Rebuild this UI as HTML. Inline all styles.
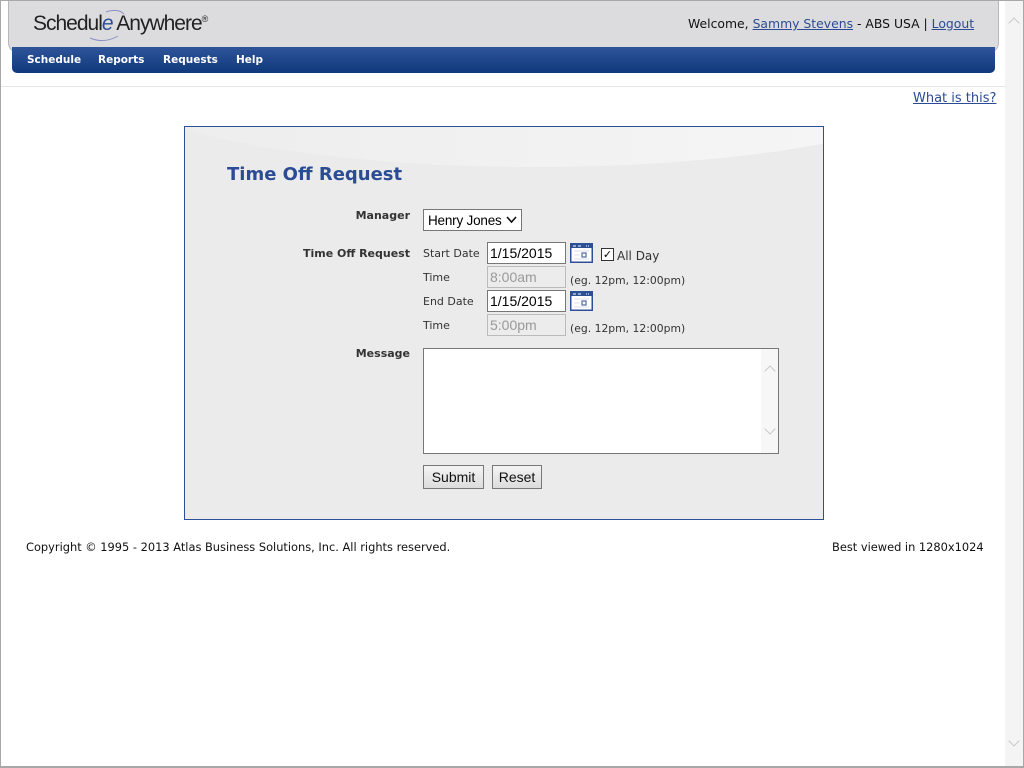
<!DOCTYPE html>
<html><head><style>
*{box-sizing:border-box;margin:0;padding:0}
body{width:1024px;height:768px;position:relative;background:#fff;font-family:"DejaVu Sans",Verdana,sans-serif;overflow:hidden}
.a{position:absolute}
.win{left:0;top:0;width:1024px;height:768px;border:1px solid #a8a8a8;border-bottom:2px solid #a8a8a8}
.sb{left:1005px;top:1px;width:18px;height:765px;background:#f4f4f4}
.hdr{left:8px;top:1px;width:991px;height:52px;background:#dcdcde;border:1px solid #b8b8ba;border-top:none;border-radius:0 0 10px 10px}
.nav{left:12px;top:47px;width:983px;height:26px;background:linear-gradient(#2f5499,#0f3a7c);border-radius:0 0 5px 5px}
.nav span{position:absolute;top:7px;color:#fff;font-weight:bold;font-size:10.5px}
.lbl{font-size:11px;font-weight:bold;color:#333;text-align:right;width:200px}
.sm{font-size:11px;color:#333}
input.t{position:absolute;height:22px;border:1px solid #777;font:14px "Liberation Sans",Arial,sans-serif;padding:0 2px;background:#fff}
input.d{background:#ececec;border-color:#bbb;color:#999}
.btn{height:24px;border:1px solid #777;background:linear-gradient(#f4f4f4,#dcdcdc);font:14px "Liberation Sans",Arial,sans-serif;text-align:center;line-height:22px;color:#111}
a{color:#2b4c94}
.chev{position:absolute;width:8px;height:8px;border-color:#c8c8c8;border-style:solid;border-width:0}
</style></head><body>
<div class="a win"></div>
<div class="a sb"><div class="chev" style="left:5px;top:18px;border-left-width:1.5px;border-top-width:1.5px;transform:rotate(45deg)"></div><div class="chev" style="left:5px;top:736px;border-right-width:1.5px;border-bottom-width:1.5px;transform:rotate(45deg)"></div></div>
<div class="a hdr"></div>
<div class="a" style="left:33px;top:12px;font:21px 'Liberation Sans',Arial,sans-serif;color:#222;letter-spacing:-1px">Schedul<i style="color:#2b4c94">e</i> Anywhere<sup style="font-size:9px">®</sup></div>
<svg class="a" style="left:84px;top:8px" width="50" height="34"><path d="M6 30 Q20 36 34 28 M22 4 Q34 0 40 6" stroke="#8a90c8" fill="none" stroke-width="1"/></svg>
<div class="a" style="left:688px;top:16px;font-size:12.4px;color:#111">Welcome, <a href="#">Sammy Stevens</a> - ABS USA | <a href="#">Logout</a></div>
<div class="a nav"><span style="left:15px">Schedule</span><span style="left:86px">Reports</span><span style="left:151px">Requests</span><span style="left:224px">Help</span></div>
<div class="a" style="left:1px;top:86px;width:1004px;height:1px;background:#e6e6e6"></div>
<div class="a" style="left:913px;top:91px;font-size:13px"><a href="#">What is this?</a></div>

<div class="a" style="left:184px;top:126px;width:640px;height:394px;border:1px solid #2d4f96;background:#ebebeb;overflow:hidden">
<div class="a" style="left:-100px;top:-160px;width:900px;height:200px;border-radius:50%;background:linear-gradient(90deg,#ececec,#f7f7f7)"></div>
<div class="a" style="left:42px;top:37px;font-size:18px;font-weight:bold;color:#2b4c94">Time Off Request</div>
</div>
<div class="a lbl" style="left:210px;top:209px">Manager</div>
<div class="a" style="left:423px;top:209px;width:99px;height:22px;border:1px solid #777;background:#fff;font:13.5px 'Liberation Sans',Arial,sans-serif;padding:3px 4px;letter-spacing:-0.2px">Henry Jones
<svg style="position:absolute;right:4px;top:6px" width="11" height="8"><path d="M1 1 L5.5 6 L10 1" stroke="#111" stroke-width="1.6" fill="none"/></svg></div>
<div class="a lbl" style="left:210px;top:247px">Time Off Request</div>
<div class="a sm" style="left:423px;top:247px">Start Date</div>
<input class="t" style="left:487px;top:242px;width:79px" value="1/15/2015">
<svg class="a" style="left:570px;top:243px" width="23" height="20"><rect x="0.75" y="0.75" width="21.5" height="18.5" fill="#fff" stroke="#2d4f96" stroke-width="1.5"/><rect x="1" y="1" width="21" height="4" fill="#2d4f96"/><path d="M3 3h3M8 3h3M16 3h1M18 3h1" stroke="#fff"/><rect x="12" y="10" width="4" height="4" fill="none" stroke="#2d4f96"/><path d="M4 8h15M4 12h6M4 16h15" stroke="#dde" /></svg>
<div class="a" style="left:601px;top:248px;width:13px;height:13px;border:1px solid #333;background:#fff;font-size:11px;line-height:11px;text-align:center">✓</div>
<div class="a sm" style="left:617px;top:249px;font-size:12px">All Day</div>
<div class="a sm" style="left:423px;top:271px">Time</div>
<input class="t d" style="left:487px;top:266px;width:79px" value="8:00am">
<div class="a sm" style="left:570px;top:274px;font-size:10.8px">(eg. 12pm, 12:00pm)</div>
<div class="a sm" style="left:423px;top:295px">End Date</div>
<input class="t" style="left:487px;top:290px;width:79px" value="1/15/2015">
<svg class="a" style="left:570px;top:291px" width="23" height="20"><rect x="0.75" y="0.75" width="21.5" height="18.5" fill="#fff" stroke="#2d4f96" stroke-width="1.5"/><rect x="1" y="1" width="21" height="4" fill="#2d4f96"/><path d="M3 3h3M8 3h3M16 3h1M18 3h1" stroke="#fff"/><rect x="12" y="10" width="4" height="4" fill="none" stroke="#2d4f96"/><path d="M4 8h15M4 12h6M4 16h15" stroke="#dde" /></svg>
<div class="a sm" style="left:423px;top:319px">Time</div>
<input class="t d" style="left:487px;top:314px;width:79px" value="5:00pm">
<div class="a sm" style="left:570px;top:322px;font-size:10.8px">(eg. 12pm, 12:00pm)</div>
<div class="a lbl" style="left:210px;top:347px">Message</div>
<div class="a" style="left:423px;top:348px;width:356px;height:106px;border:1px solid #777;background:#fff"><div class="a" style="right:0;top:0;width:17px;height:104px;background:#f7f7f7">
<div class="chev" style="left:5px;top:18px;border-left-width:1.5px;border-top-width:1.5px;transform:rotate(45deg)"></div><div class="chev" style="left:5px;top:76px;border-right-width:1.5px;border-bottom-width:1.5px;transform:rotate(45deg)"></div></div></div>
<div class="a btn" style="left:423px;top:465px;width:61px">Submit</div>
<div class="a btn" style="left:492px;top:465px;width:50px">Reset</div>
<div class="a" style="left:26px;top:540px;font-size:11.4px;color:#111">Copyright © 1995 - 2013 Atlas Business Solutions, Inc. All rights reserved.</div>
<div class="a" style="left:832px;top:540px;font-size:11.4px;color:#111">Best viewed in 1280x1024</div>
</body></html>
